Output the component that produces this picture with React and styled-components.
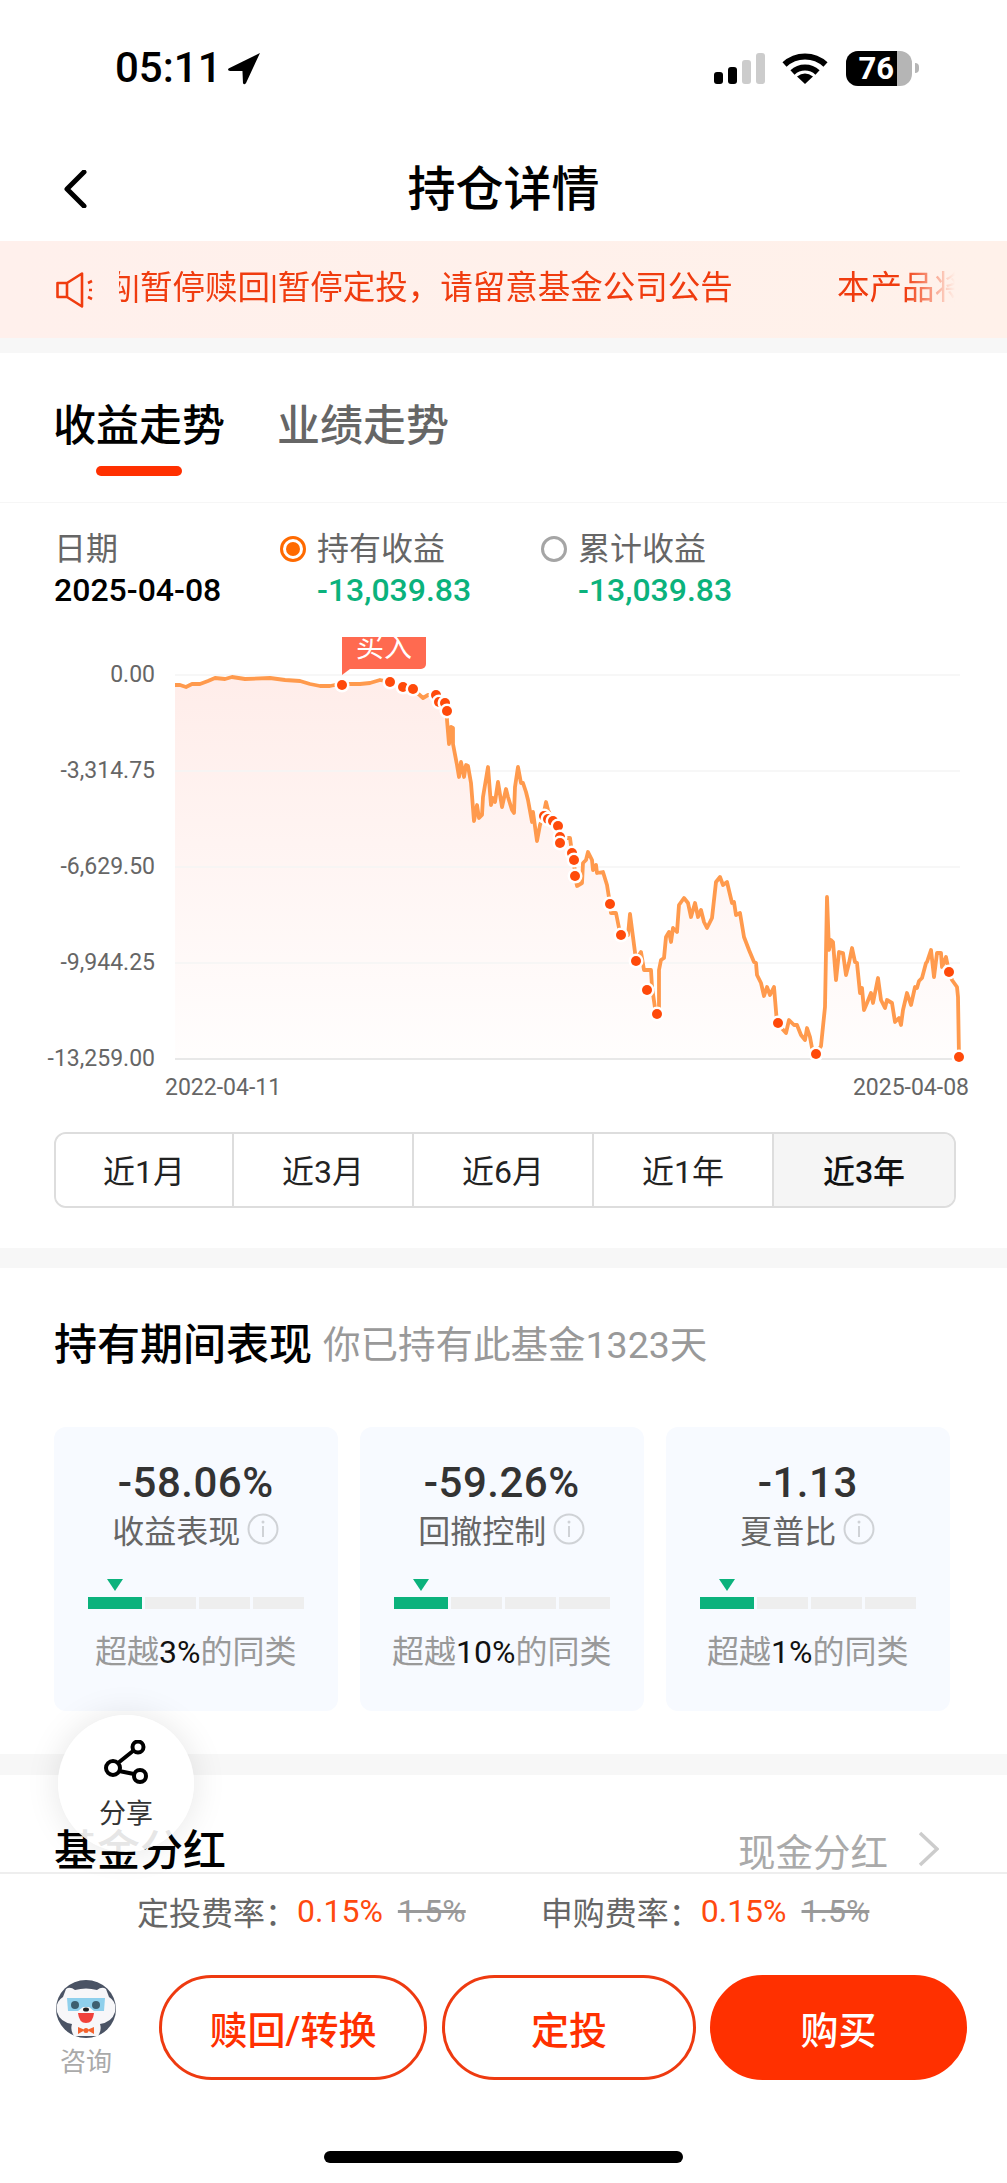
import React from "react";
import styled, { createGlobalStyle } from "styled-components";

const FONT = `Roboto, "Noto Sans CJK SC", sans-serif`;
const RED = "#ff3000";
const GREEN = "#0bb27c";

const Global = createGlobalStyle`
  html, body { margin: 0; padding: 0; background: #fff; }
  * { box-sizing: border-box; }
`;

const Page = styled.div`
  position: relative;
  width: 1007px;
  height: 2183px;
  overflow: hidden;
  background: #fff;
  font-family: ${FONT};
  color: #111;
`;

/* status bar */
const StatusBar = styled.div`
  height: 136px;
  display: flex;
  align-items: center;
  justify-content: space-between;
  padding: 0 88px 0 115px;
`;
const TimeGroup = styled.div`
  display: flex;
  align-items: center;
  gap: 5px;
`;
const Time = styled.span`
  font-size: 42px;
  font-weight: 500;
  line-height: 44px;
  color: #000;
`;
const StatusIcons = styled.div`
  display: flex;
  align-items: center;
  gap: 17px;
`;
const Signal = styled.div`
  display: flex;
  align-items: flex-end;
  gap: 5px;
  height: 31px;
`;
const SignalBar = styled.i`
  display: block;
  width: 9px;
  height: ${(p) => p.$h}px;
  border-radius: 3px;
  background: ${(p) => (p.$on ? "#000" : "#ccc")};
`;
const Battery = styled.div`
  position: relative;
  width: 66px;
  height: 35px;
  border-radius: 12px;
  overflow: hidden;
  background: #b5b5b5;
  display: flex;
`;
const BatteryFill = styled.div`
  width: 51px;
  background: #000;
  color: #fff;
  font-size: 31px;
  font-weight: 700;
  line-height: 35px;
  text-align: right;
  padding-right: 3px;
`;
const BatteryGroup = styled.div`
  display: flex;
  align-items: center;
  gap: 3px;
  margin-left: 1px;
`;
const BatteryNub = styled.i`
  display: block;
  width: 4px;
  height: 10px;
  border-radius: 0 4px 4px 0;
  background: #b5b5b5;
`;

/* nav */
const Nav = styled.div`
  position: relative;
  height: 105px;
  display: flex;
  align-items: center;
  justify-content: center;
  padding-top: 3px;
`;
const BackIcon = styled.svg`
  position: absolute;
  left: 62px;
  top: 34px;
`;
const Title = styled.h1`
  margin: 0;
  font-size: 48px;
  line-height: 60px;
  font-weight: 500;
  color: #000;
`;

/* notice */
const Notice = styled.div`
  height: 97px;
  display: flex;
  align-items: center;
  padding: 0 52px 0 56px;
  background: linear-gradient(90deg, #fff0ec, #fff1ea);
`;
const Marquee = styled.div`
  flex: 1;
  min-width: 0;
  margin-left: 26px;
  overflow: hidden;
  display: flex;
  white-space: nowrap;
  gap: 104px;
  font-size: 32.5px;
  line-height: 44px;
  color: #f03c0f;
  -webkit-mask-image: linear-gradient(90deg, #000 94%, transparent);
  mask-image: linear-gradient(90deg, #000 94%, transparent);
`;
const MarqueeText = styled.span`
  flex: none;
  margin-left: ${(p) => p.$offset || 0}px;
  margin-top: -4px;
`;

const Band = styled.div`
  height: ${(p) => p.$h}px;
  background: #f7f7f7;
`;

/* tabs */
const Tabs = styled.div`
  height: 150px;
  padding: 43px 54px 0 53px;
  display: flex;
  gap: 52px;
  border-bottom: 1px solid #f6f6f6;
`;
const Tab = styled.div`
  display: flex;
  flex-direction: column;
  align-items: center;
`;
const TabLabel = styled.span`
  font-size: 43px;
  line-height: 60px;
  font-weight: 500;
  color: ${(p) => (p.$active ? "#000" : "#666")};
`;
const TabLine = styled.i`
  display: block;
  width: 86px;
  height: 10px;
  margin-top: 10px;
  border-radius: 5px;
  background: ${RED};
`;

/* legend */
const Legend = styled.div`
  display: flex;
  padding: 26px 0 0 54px;
`;
const LegendCol = styled.div`
  width: ${(p) => p.$w}px;
  flex: none;
`;
const LegendLabelRow = styled.div`
  display: flex;
  align-items: center;
  gap: 11px;
  height: 40px;
`;
const LegendLabel = styled.span`
  font-size: 32px;
  line-height: 40px;
  color: #666;
`;
const Radio = styled.i`
  display: block;
  width: 26px;
  height: 26px;
  border-radius: 50%;
  border: ${(p) => (p.$on ? "3px solid #ff6a00" : "3px solid #a5a5a5")};
  padding: 3px;
  background: #fff;
  &::after {
    content: "";
    display: ${(p) => (p.$on ? "block" : "none")};
    width: 100%;
    height: 100%;
    border-radius: 50%;
    background: #ff6a00;
  }
`;
const LegendValue = styled.div`
  font-size: 32px;
  line-height: 42px;
  font-weight: 500;
  color: ${(p) => p.$color || "#000"};
  margin-left: ${(p) => p.$indent || 0}px;
`;

/* chart */
const ChartRow = styled.div`
  position: relative;
  display: flex;
  height: 384px;
  margin-top: 64px;
`;
const YAxis = styled.div`
  width: 155px;
  height: 412px;
  margin-top: -14px;
  display: flex;
  flex-direction: column;
  justify-content: space-between;
  align-items: flex-end;
`;
const AxisText = styled.span`
  font-size: 23px;
  line-height: 28px;
  color: #666;
`;
const Plot = styled.div`
  position: relative;
  margin-left: 20px;
  width: 785px;
  height: 384px;
  svg { display: block; overflow: visible; }
`;
const BuyBadge = styled.div`
  position: absolute;
  left: 167px;
  top: -38px;
  width: 84px;
  height: 32px;
  overflow: hidden;
  background: #ff6a50;
  border-radius: 0 0 5px 0;
  color: #fff;
  font-size: 28px;
  line-height: 28px;
  text-align: center;
`;
const BuyText = styled.span`
  display: block;
  margin-top: -3px;
`;
const BuyTail = styled.i`
  position: absolute;
  left: 167px;
  top: -6px;
  width: 0;
  height: 0;
  border-top: 6px solid #ff6a50;
  border-right: 8px solid transparent;
`;
const XAxis = styled.div`
  display: flex;
  justify-content: space-between;
  padding: 0 38px 0 165px;
  margin-top: 15px;
`;

/* range selector */
const Range = styled.div`
  display: grid;
  grid-template-columns: 176px 180px 180px 180px 1fr;
  height: 76px;
  margin: 30px 51px 40px 54px;
  border: 2px solid #ddd;
  border-radius: 12px;
  overflow: hidden;
`;
const RangeCell = styled.div`
  display: flex;
  align-items: center;
  justify-content: center;
  padding-bottom: 3px;
  font-size: 32px;
  font-weight: ${(p) => (p.$active ? 500 : 400)};
  color: ${(p) => (p.$active ? "#111" : "#222")};
  background: ${(p) => (p.$active ? "#f5f5f5" : "#fff")};
  & + & { border-left: 2px solid #ddd; }
`;

/* holding performance */
const Section = styled.section`
  padding: 47px 54px 43px;
`;
const SectionHead = styled.div`
  display: flex;
  align-items: center;
  gap: 11px;
  height: 60px;
`;
const SectionTitle = styled.h2`
  margin: 0;
  font-size: 43px;
  line-height: 60px;
  font-weight: 500;
  color: #000;
`;
const SectionSub = styled.span`
  font-size: 37.5px;
  line-height: 60px;
  color: #999;
`;
const Cards = styled.div`
  display: grid;
  grid-template-columns: repeat(3, 283.5px);
  gap: 22.5px;
  margin-top: 52px;
`;
const Card = styled.div`
  height: 284px;
  padding: 31px 34px 0;
  border-radius: 12px;
  background: #f7faff;
  display: flex;
  flex-direction: column;
  align-items: center;
`;
const CardValue = styled.div`
  font-size: 42px;
  line-height: 50px;
  font-weight: 500;
  color: #333;
  letter-spacing: 0.5px;
`;
const CardLabel = styled.div`
  display: flex;
  align-items: center;
  gap: 7px;
  margin-top: 1px;
  height: 40px;
  font-size: 32px;
  color: #666;
`;
const Meter = styled.div`
  width: 216px;
  margin-top: 30px;
  display: grid;
  grid-template-columns: 54px repeat(3, 1fr);
  column-gap: 3px;
  row-gap: 6px;
`;
const Marker = styled.i`
  grid-column: 1;
  justify-self: center;
  width: 0;
  height: 0;
  border-left: 8.5px solid transparent;
  border-right: 8.5px solid transparent;
  border-top: 12px solid ${GREEN};
`;
const Segment = styled.i`
  grid-row: 2;
  display: block;
  height: 12px;
  background: ${(p) => (p.$on ? GREEN : "#eee")};
`;
const Rank = styled.div`
  margin-top: 23px;
  font-size: 32px;
  line-height: 40px;
  color: #999;
  white-space: nowrap;
  b { font-weight: 400; color: #111; }
`;

/* dividend */
const DividendRow = styled.div`
  display: flex;
  align-items: center;
  justify-content: space-between;
  padding: 47px 68px 0 54px;
  height: 105px;
`;
const DividendValue = styled.div`
  display: flex;
  align-items: center;
  gap: 30px;
  font-size: 37.5px;
  color: #aaa;
  margin-top: -4px;
`;

/* floating share */
const Share = styled.div`
  position: absolute;
  left: 58px;
  top: 1715px;
  width: 136px;
  height: 137px;
  border-radius: 50%;
  background: rgba(255, 255, 255, 0.9);
  box-shadow: 0 0 34px rgba(0, 0, 0, 0.1);
  display: flex;
  flex-direction: column;
  align-items: center;
  padding-top: 25px;
  z-index: 2;
`;
const ShareText = styled.span`
  margin-top: 11px;
  font-size: 27px;
  line-height: 34px;
  color: #333;
`;

/* bottom bar */
const BottomBar = styled.div`
  position: absolute;
  left: 0;
  right: 0;
  top: 1872px;
  bottom: 0;
  background: #fff;
  border-top: 2px solid #eee;
  z-index: 1;
`;
const Fees = styled.div`
  display: flex;
  gap: 75px;
  padding: 17px 0 0 137px;
  height: 101px;
`;
const Fee = styled.div`
  display: flex;
  align-items: center;
  height: 40px;
  font-size: 32px;
  color: #666;
`;
const FeeNow = styled.span`
  color: #ff4a0f;
  margin-right: 15px;
`;
const FeeOld = styled.s`
  color: #999;
`;
const Actions = styled.div`
  display: flex;
  align-items: flex-start;
  padding-left: 56px;
`;
const Consult = styled.div`
  width: 60px;
  margin-right: 43px;
  margin-top: 5px;
  display: flex;
  flex-direction: column;
  align-items: center;
`;
const ConsultText = styled.span`
  margin-top: 5px;
  font-size: 26px;
  line-height: 34px;
  color: #aaa;
  white-space: nowrap;
`;
const ActionButton = styled.div`
  width: ${(p) => p.$w}px;
  height: 105px;
  margin-right: ${(p) => p.$gap || 0}px;
  border-radius: 53px;
  border: 3px solid ${(p) => (p.$solid ? RED : "#ee3a10")};
  background: ${(p) => (p.$solid ? RED : "#fff")};
  color: ${(p) => (p.$solid ? "#fff" : RED)};
  display: flex;
  align-items: center;
  justify-content: center;
  font-size: 38px;
  font-weight: 500;
`;
const HomeBar = styled.div`
  position: absolute;
  left: 324px;
  bottom: 20px;
  width: 359px;
  height: 12px;
  border-radius: 6px;
  background: #000;
  z-index: 3;
`;

const LINE = [
  [175,685],[180,685],[186,687],[192,684],[200,684],[208,681],[215,678],[225,679],[232,677],[245,679],[270,678],[285,680],[300,681],[310,684],[320,686],[330,686],[340,684],[360,684],[370,683],[380,680],[390,682],[403,687],[413,689],[423,698],[428,695],[436,695],[445,703],[447,711],
  [447,720],[449,744],[451,727],[453,728],[453,744],[457,765],[459,777],[461,762],[464,777],[466,765],[468,766],[471,783],[474,821],[477,805],[479,818],[482,815],[483,797],[488,767],[491,805],[493,798],[495,802],[498,782],[502,807],[506,789],[508,797],[512,810],[514,813],[515,787],[518,767],[521,783],[523,783],[526,792],[528,800],[532,822],[533,812],[537,841],[540,825],[543,817],[546,802],[548,810],[552,818],[558,826],[562,838],[570,838],[572,853],[574,860],[575,876],[577,886],[582,883],[583,863],[586,860],[588,852],[592,860],[593,870],[596,865],[597,873],[603,872],[607,885],[610,904],[611,913],[616,913],[619,928],[621,935],[628,935],[630,914],[633,937],[636,960],[641,952],[644,970],[647,970],[651,970],[652,987],[655,1008],[657,1014],[659,1008],[659,970],[661,960],[664,958],[666,937],[669,932],[671,942],[673,928],[677,932],[679,905],[684,898],[688,903],[691,917],[695,903],[698,917],[701,910],[704,922],[707,928],[712,918],[716,882],[720,877],[723,885],[727,882],[732,903],[734,902],[736,915],[740,913],[744,937],[749,950],[754,962],[756,963],[757,975],[761,983],[764,996],[767,987],[770,995],[774,987],[777,1023],[786,1033],[789,1020],[794,1025],[797,1025],[801,1035],[805,1040],[807,1028],[810,1037],[812,1048],[816,1054],[821,1046],[825,1007],[827,897],[829,950],[831,940],[833,942],[836,980],[839,952],[843,953],[846,975],[849,963],[852,948],[855,962],[857,963],[860,993],[862,988],[864,1010],[867,1003],[871,993],[873,1003],[878,978],[881,1000],[885,1008],[887,1000],[892,1003],[895,1022],[899,1018],[901,1025],[903,1010],[907,993],[911,1005],[915,987],[917,988],[919,981],[922,978],[926,963],[927,962],[931,950],[934,977],[937,953],[941,953],[942,967],[946,957],[948,967],[949,972],[952,980],[957,987],[958,997],[959,1057],
];
const DOTS = [
  [342,685],[390,682],[403,687],[413,689],[436,695],[439,702],[445,703],[447,711],
  [544,816],[548,819],[553,821],[558,826],[560,837],[560,843],[572,853],[574,860],[575,876],
  [610,904],[621,935],[636,961],[647,990],[657,1014],[778,1023],[816,1054],[949,972],[959,1057],
];
const lineD = "M" + LINE.map((p) => p.join(" ")).join("L");
const areaD = lineD + "L959 1059L175 1059Z";

function Chart() {
  return (
    <svg width="785" height="384" viewBox="175 675 785 384">
      <defs>
        <linearGradient id="area" x1="0" y1="0" x2="0" y2="1">
          <stop offset="0" stopColor="#ff5a3c" stopOpacity="0.11" />
          <stop offset="1" stopColor="#ff5a3c" stopOpacity="0.01" />
        </linearGradient>
      </defs>
      <path d={areaD} fill="url(#area)" />
      {[675, 771, 867, 963].map((y) => (
        <line key={y} x1="175" x2="960" y1={y} y2={y} stroke="#f5f5f5" strokeWidth="1.5" />
      ))}
      <line x1="175" x2="960" y1="1059" y2="1059" stroke="#e8e8e8" strokeWidth="2" />
      <path d={lineD} fill="none" stroke="#ff9a4d" strokeWidth="3.8" strokeLinejoin="round" />
      {DOTS.map(([x, y]) => (
        <g key={`${x}-${y}`}>
          <circle cx={x} cy={y} r="7.5" fill="#fff" />
          <circle cx={x} cy={y} r="5" fill="#ff4a0a" />
        </g>
      ))}
    </svg>
  );
}

function InfoIcon() {
  return (
    <svg width="32" height="32" viewBox="0 0 32 32">
      <circle cx="16" cy="16" r="14.5" fill="none" stroke="#cfd2d6" strokeWidth="2" />
      <circle cx="16" cy="9" r="1.5" fill="#cfd2d6" />
      <rect x="15" y="13" width="2" height="11" fill="#cfd2d6" />
    </svg>
  );
}

function Mascot() {
  return (
    <svg width="60" height="60" viewBox="0 0 60 60">
      <ellipse cx="30" cy="29" rx="30" ry="29" fill="#4a5364" />
      <path d="M10 9 Q14 6 19 10 Q30 7 41 10 Q46 6 50 9 L53 17 Q61 22 59 32 Q56 42 44 44 Q46 50 42 56 H18 Q14 50 16 44 Q4 42 1 32 Q-1 22 7 17 Z" fill="#f7f7f9" />
      <path d="M11 18 H49 L48 31 H38 L33 27 H27 L22 31 H12 Z" fill="#8fd0ec" />
      <circle cx="19" cy="25" r="4" fill="#3d5f70" />
      <circle cx="40" cy="25" r="4" fill="#3d5f70" />
      <ellipse cx="30" cy="29.5" rx="3" ry="2" fill="#222" />
      <path d="M22 33 H38 Q37 43 30 43 Q23 43 22 33 Z" fill="#f0413a" />
      <path d="M22 47 L29 50 L22 54 Z M38 47 L31 50 L38 54 Z" fill="#f4632e" />
      <circle cx="30" cy="50.5" r="2.5" fill="#f4632e" />
    </svg>
  );
}

const RANKS = [
  { value: "-58.06%", label: "收益表现", pct: "3%" },
  { value: "-59.26%", label: "回撤控制", pct: "10%" },
  { value: "-1.13", label: "夏普比", pct: "1%" },
];
const Y_LABELS = ["0.00", "-3,314.75", "-6,629.50", "-9,944.25", "-13,259.00"];
const RANGES = ["近1月", "近3月", "近6月", "近1年", "近3年"];

export default function App() {
  return (
    <Page>
      <Global />
      <StatusBar>
        <TimeGroup>
          <Time>05:11</Time>
          <svg width="34" height="33" viewBox="0 0 33 32">
            <path d="M32 1 L1.5 16 Q0 18 3 18.5 L15 18.5 L15.5 30 Q16.5 32.5 18.5 30 Z" fill="#000" />
          </svg>
        </TimeGroup>
        <StatusIcons>
          <Signal>
            <SignalBar $h={12} $on />
            <SignalBar $h={17} $on />
            <SignalBar $h={24} />
            <SignalBar $h={31} />
          </Signal>
          <svg width="46" height="31" viewBox="0 0 46 31">
            <path d="M2.5 11.5 A30 30 0 0 1 43.5 11.5" fill="none" stroke="#000" strokeWidth="6" />
            <path d="M10.5 19.5 A18 18 0 0 1 35.5 19.5" fill="none" stroke="#000" strokeWidth="6" />
            <path d="M23 31 L15 23.5 Q23 17.5 31 23.5 Z" fill="#000" />
          </svg>
          <BatteryGroup>
            <Battery>
              <BatteryFill>76</BatteryFill>
            </Battery>
            <BatteryNub />
          </BatteryGroup>
        </StatusIcons>
      </StatusBar>

      <Nav>
        <BackIcon width="26" height="38" viewBox="0 0 26 38">
          <path d="M22 2 L5 19 L22 36" fill="none" stroke="#000" strokeWidth="5" strokeLinecap="round" strokeLinejoin="round" />
        </BackIcon>
        <Title>持仓详情</Title>
      </Nav>

      <Notice>
        <svg width="37" height="36" viewBox="0 0 37 36" style={{ flex: "none" }}>
          <path d="M1.5 11 H11 L26 1.5 V34.5 L11 25 H1.5 Z M11 11 V25" fill="none" stroke="#f03c0f" strokeWidth="2.6" strokeLinejoin="round" />
          <path d="M32 11 L36 9 M32 25 L36 27 M33 18 H36" fill="none" stroke="#f03c0f" strokeWidth="2.6" />
        </svg>
        <Marquee>
          <MarqueeText $offset={-117}>暂停申购|暂停赎回|暂停定投，请留意基金公司公告</MarqueeText>
          <MarqueeText>本产品将</MarqueeText>
        </Marquee>
      </Notice>
      <Band $h={15} />

      <Tabs>
        <Tab>
          <TabLabel $active>收益走势</TabLabel>
          <TabLine />
        </Tab>
        <Tab>
          <TabLabel>业绩走势</TabLabel>
        </Tab>
      </Tabs>

      <Legend>
        <LegendCol $w={226}>
          <LegendLabelRow><LegendLabel>日期</LegendLabel></LegendLabelRow>
          <LegendValue>2025-04-08</LegendValue>
        </LegendCol>
        <LegendCol $w={261}>
          <LegendLabelRow><Radio $on /><LegendLabel>持有收益</LegendLabel></LegendLabelRow>
          <LegendValue $color={GREEN} $indent={37}>-13,039.83</LegendValue>
        </LegendCol>
        <LegendCol $w={240}>
          <LegendLabelRow><Radio /><LegendLabel>累计收益</LegendLabel></LegendLabelRow>
          <LegendValue $color={GREEN} $indent={37}>-13,039.83</LegendValue>
        </LegendCol>
      </Legend>

      <ChartRow>
        <YAxis>
          {Y_LABELS.map((t) => <AxisText key={t}>{t}</AxisText>)}
        </YAxis>
        <Plot>
          <Chart />
          <BuyBadge><BuyText>买入</BuyText></BuyBadge>
          <BuyTail />
        </Plot>
      </ChartRow>
      <XAxis>
        <AxisText>2022-04-11</AxisText>
        <AxisText>2025-04-08</AxisText>
      </XAxis>

      <Range>
        {RANGES.map((r, i) => <RangeCell key={r} $active={i === 4}>{r}</RangeCell>)}
      </Range>
      <Band $h={20} />

      <Section>
        <SectionHead>
          <SectionTitle>持有期间表现</SectionTitle>
          <SectionSub>你已持有此基金1323天</SectionSub>
        </SectionHead>
        <Cards>
          {RANKS.map((c) => (
            <Card key={c.label}>
              <CardValue>{c.value}</CardValue>
              <CardLabel>{c.label}<InfoIcon /></CardLabel>
              <Meter>
                <Marker />
                <Segment $on />
                <Segment />
                <Segment />
                <Segment />
              </Meter>
              <Rank>超越<b>{c.pct}</b>的同类</Rank>
            </Card>
          ))}
        </Cards>
      </Section>
      <Band $h={21} />

      <DividendRow>
        <SectionTitle>基金分红</SectionTitle>
        <DividendValue>
          现金分红
          <svg width="21" height="36" viewBox="0 0 21 36">
            <path d="M2 2 L19 18 L2 34" fill="none" stroke="#ccc" strokeWidth="3.5" />
          </svg>
        </DividendValue>
      </DividendRow>

      <Share>
        <svg width="46" height="46" viewBox="0 0 46 46">
          <path d="M15 23 L30 11 M16 31 L31 34" fill="none" stroke="#000" strokeWidth="4" />
          <circle cx="35" cy="7" r="5.5" fill="#fff" stroke="#000" strokeWidth="4" />
          <circle cx="10" cy="28" r="7" fill="#fff" stroke="#000" strokeWidth="4" />
          <circle cx="37" cy="36" r="6" fill="#fff" stroke="#000" strokeWidth="4" />
        </svg>
        <ShareText>分享</ShareText>
      </Share>

      <BottomBar>
        <Fees>
          <Fee>定投费率：<FeeNow>0.15%</FeeNow><FeeOld>1.5%</FeeOld></Fee>
          <Fee>申购费率：<FeeNow>0.15%</FeeNow><FeeOld>1.5%</FeeOld></Fee>
        </Fees>
        <Actions>
          <Consult>
            <Mascot />
            <ConsultText>咨询</ConsultText>
          </Consult>
          <ActionButton $w={268} $gap={15}>赎回/转换</ActionButton>
          <ActionButton $w={254} $gap={14}>定投</ActionButton>
          <ActionButton $w={257} $solid>购买</ActionButton>
        </Actions>
      </BottomBar>
      <HomeBar />
    </Page>
  );
}
